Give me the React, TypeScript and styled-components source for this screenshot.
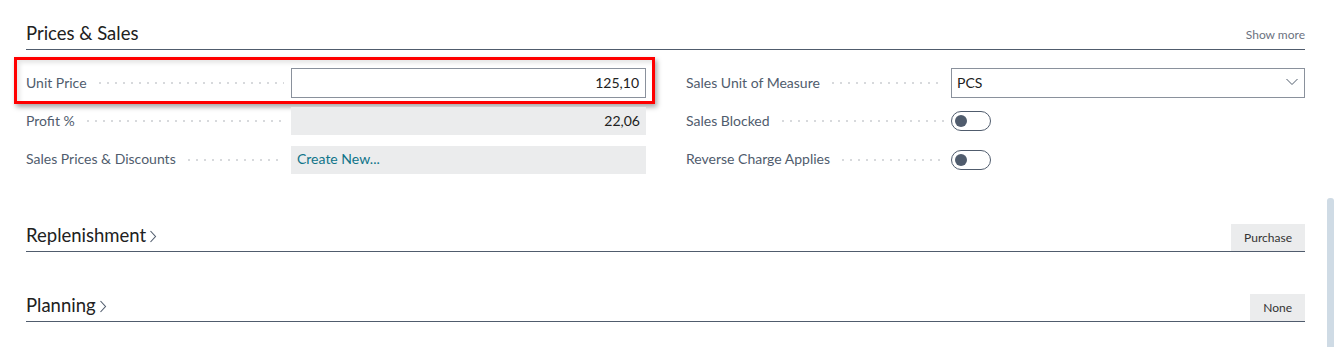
import React from 'react';
import styled, { createGlobalStyle } from 'styled-components';

const FONT = "'Lato', 'Open Sans', sans-serif";
const INK = '#212121';
const SLATE = '#505c6d';

const GlobalStyle = createGlobalStyle`
  html, body {
    margin: 0;
    padding: 0;
    background: #ffffff;
  }

  body {
    font-family: ${FONT};
    color: ${INK};
    overflow: hidden;
  }
`;

const Page = styled.div`
  width: 1279px;
  padding: 0 39px 0 26px;
`;

const FastTab = styled.section<{ gap?: number }>`
  margin-top: ${(p) => p.gap || 0}px;
`;

const TabHeader = styled.div<{ height: number }>`
  display: flex;
  align-items: flex-end;
  justify-content: space-between;
  height: ${(p) => p.height}px;
  border-bottom: 1px solid ${SLATE};
`;

const TitleRow = styled.div`
  display: flex;
  align-items: baseline;
  gap: 3px;
  padding-bottom: 5px;
`;

const Title = styled.h2`
  margin: 0;
  font-family: ${FONT};
  font-size: 18.5px;
  font-weight: 400;
  line-height: 22px;
  color: ${INK};
`;

const Chevron = styled.svg`
  width: 8px;
  height: 13px;
  align-self: center;
  margin-top: 3px;
`;

const ShowMore = styled.span`
  font-size: 12px;
  line-height: 16px;
  color: #6b7280;
  padding-bottom: 6px;
`;

const Pill = styled.span`
  display: flex;
  align-items: center;
  height: 27px;
  padding: 0 13px;
  background: #ebeced;
  font-size: 12px;
  color: #333333;
`;

const FieldGrid = styled.div`
  display: grid;
  grid-template-columns: 620px 619px;
  column-gap: 40px;
  padding-top: 18px;
`;

const Column = styled.div`
  display: flex;
  flex-direction: column;
  gap: 9.5px;
`;

const FieldRow = styled.div`
  position: relative;
  display: grid;
  grid-template-columns: 265px 1fr;
  align-items: center;
  height: 29px;
`;

const Caption = styled.div`
  display: flex;
  align-items: center;
  padding: 0 7px 2px 0;
  font-size: 14px;
  color: ${SLATE};
  white-space: nowrap;
`;

const Leader = styled.span`
  flex: 1;
  height: 2px;
  margin-left: 12px;
  margin-top: 2px;
  background-image: linear-gradient(to right, #d7d9dc 2px, transparent 2px);
  background-size: 8px 2px;
  background-repeat: repeat-x;
`;

const Box = styled.div<{ kind: 'input' | 'readonly' | 'select' }>`
  box-sizing: border-box;
  display: flex;
  align-items: center;
  justify-content: ${(p) => (p.kind === 'select' ? 'space-between' : 'flex-start')};
  height: ${(p) => (p.kind === 'readonly' ? 28 : 30)}px;
  padding: 0 6px 2px ${(p) => (p.kind === 'select' ? 5 : 6)}px;
  background: ${(p) => (p.kind === 'readonly' ? '#ebeced' : '#ffffff')};
  border: ${(p) => (p.kind === 'readonly' ? 'none' : '1px solid #8a919c')};
  font-size: 14px;
  color: ${INK};
`;

const Value = styled.span<{ right?: boolean; link?: boolean }>`
  flex: 1;
  text-align: ${(p) => (p.right ? 'right' : 'left')};
  color: ${(p) => (p.link ? '#0f7489' : INK)};
`;

const Toggle = styled.span`
  box-sizing: border-box;
  display: flex;
  align-items: center;
  width: 40px;
  height: 20px;
  padding-left: 3px;
  border: 1.5px solid ${SLATE};
  border-radius: 10px;

  &::before {
    content: '';
    width: 12px;
    height: 12px;
    border-radius: 50%;
    background: ${SLATE};
  }
`;

const Highlight = styled.div`
  position: absolute;
  left: -12px;
  top: -11px;
  right: -9px;
  bottom: -7px;
  border: 3px solid #ff0000;
  box-shadow: 2px 3px 5px rgba(0, 0, 0, 0.35), inset 3px 3px 4px rgba(0, 0, 0, 0.1);
  pointer-events: none;
`;

const Scrollbar = styled.div`
  position: fixed;
  top: 198px;
  bottom: 0;
  right: 10px;
  width: 7px;
  border-radius: 3px 3px 0 0;
  background: #cfdbe5;
`;

const ChevronRight = () => (
  <Chevron viewBox="0 0 8 13">
    <polyline points="1.5,1 6.5,6.5 1.5,12" fill="none" stroke={SLATE} strokeWidth="1.1" />
  </Chevron>
);

const DropArrow = () => (
  <svg width="12" height="8" viewBox="0 0 12 8">
    <polyline points="0.5,1 6,6.5 11.5,1" fill="none" stroke="#505c6d" strokeWidth="1" />
  </svg>
);

type FieldProps = {
  label: string;
  children: React.ReactNode;
  highlighted?: boolean;
};

const Field = ({ label, children, highlighted }: FieldProps) => (
  <FieldRow>
    <Caption>
      {label}
      <Leader />
    </Caption>
    <div>{children}</div>
    {highlighted && <Highlight />}
  </FieldRow>
);

export default function App() {
  return (
    <>
      <GlobalStyle />
      <Page>
        <FastTab>
          <TabHeader height={49}>
            <TitleRow>
              <Title>Prices &amp; Sales</Title>
            </TitleRow>
            <ShowMore>Show more</ShowMore>
          </TabHeader>
          <FieldGrid>
            <Column>
              <Field label="Unit Price" highlighted>
                <Box kind="input">
                  <Value right>125,10</Value>
                </Box>
              </Field>
              <Field label="Profit %">
                <Box kind="readonly">
                  <Value right>22,06</Value>
                </Box>
              </Field>
              <Field label="Sales Prices & Discounts">
                <Box kind="readonly">
                  <Value link>Create New...</Value>
                </Box>
              </Field>
            </Column>
            <Column>
              <Field label="Sales Unit of Measure">
                <Box kind="select">
                  <Value>PCS</Value>
                  <DropArrow />
                </Box>
              </Field>
              <Field label="Sales Blocked">
                <Toggle />
              </Field>
              <Field label="Reverse Charge Applies">
                <Toggle />
              </Field>
            </Column>
          </FieldGrid>
        </FastTab>

        <FastTab gap={50}>
          <TabHeader height={27}>
            <TitleRow>
              <Title>Replenishment</Title>
              <ChevronRight />
            </TitleRow>
            <Pill>Purchase</Pill>
          </TabHeader>
        </FastTab>

        <FastTab gap={42}>
          <TabHeader height={27}>
            <TitleRow>
              <Title>Planning</Title>
              <ChevronRight />
            </TitleRow>
            <Pill>None</Pill>
          </TabHeader>
        </FastTab>
      </Page>
      <Scrollbar />
    </>
  );
}
